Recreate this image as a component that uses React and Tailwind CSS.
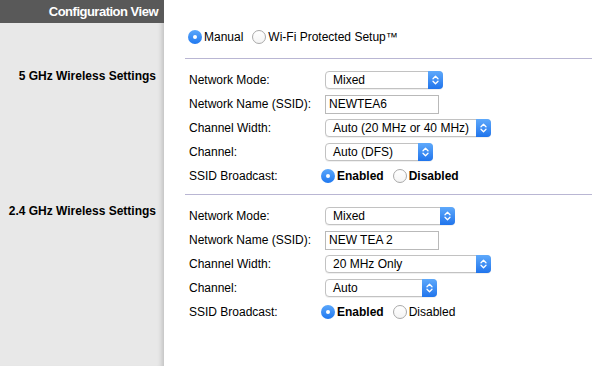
import React from 'react';

const font = { fontFamily: '"Liberation Sans", Arial, Helvetica, sans-serif' };

function Radio({ checked }) {
  return checked ? (
    <span className="flex h-[14px] w-[14px] shrink-0 items-center justify-center rounded-full bg-gradient-to-b from-[#5aa7fb] to-[#1e78f0]">
      <span className="block h-[4px] w-[4px] rounded-full bg-white" />
    </span>
  ) : (
    <span className="block h-[14px] w-[14px] shrink-0 rounded-full border border-[#a9a9a9] bg-gradient-to-b from-white to-[#f4f4f4]" />
  );
}

function Select({ value, width }) {
  return (
    <div
      className="flex h-[18px] items-stretch rounded-[4px] border border-[#c2c2c2] bg-white shadow-[0_1px_0_rgba(0,0,0,0.06)]"
      style={{ width }}
    >
      <span className="flex-1 pl-[7px] text-[12px] leading-[16px] text-black">{value}</span>
      <span className="-my-px -mr-px flex w-[15px] items-center justify-center rounded-r-[4px] bg-gradient-to-b from-[#5ea9fb] to-[#1f74ec]">
        <svg width="7" height="10" viewBox="0 0 7 10" fill="none" stroke="white" strokeWidth="1.3" strokeLinecap="round" strokeLinejoin="round">
          <path d="M1 3.8 L3.5 1.3 L6 3.8" />
          <path d="M1 6.2 L3.5 8.7 L6 6.2" />
        </svg>
      </span>
    </div>
  );
}

function TextInput({ value }) {
  return (
    <div className="flex h-[19px] w-[114px] items-center border border-[#b9b9b9] bg-white pl-[3px] text-[12px] text-black">
      {value}
    </div>
  );
}

function Row({ label, children }) {
  return (
    <div className="flex h-[24px] items-center">
      <span className="w-[136px] text-[12px] text-black">{label}</span>
      <div className="flex items-center">{children}</div>
    </div>
  );
}

function Section({ s }) {
  return (
    <div className="flex flex-col">
      <Row label="Network Mode:">
        <Select value="Mixed" width={s.modeWidth} />
      </Row>
      <Row label="Network Name (SSID):">
        <TextInput value={s.ssid} />
      </Row>
      <Row label="Channel Width:">
        <Select value={s.widthValue} width={166} />
      </Row>
      <Row label="Channel:">
        <Select value={s.channel} width={s.channelWidth} />
      </Row>
      <Row label="SSID Broadcast:">
        <div className="-ml-[4px] flex items-center text-[12px] text-black">
          <Radio checked />
          <span className="ml-[2px] font-bold">Enabled</span>
          <span className="ml-[9px]"><Radio /></span>
          <span className={`ml-[2px] ${s.boldDisabled ? 'font-bold' : ''}`}>Disabled</span>
        </div>
      </Row>
    </div>
  );
}

const sections = [
  { ssid: 'NEWTEA6', modeWidth: 118, widthValue: 'Auto (20 MHz or 40 MHz)', channel: 'Auto (DFS)', channelWidth: 108, boldDisabled: true },
  { ssid: 'NEW TEA 2', modeWidth: 130, widthValue: '20 MHz Only', channel: 'Auto', channelWidth: 112, boldDisabled: false },
];

export default function App() {
  return (
    <div className="flex h-[366px] w-[592px] overflow-hidden bg-white" style={font}>
      {/* Sidebar */}
      <aside className="flex w-[164px] shrink-0 flex-col bg-[#e8e8e8] shadow-[inset_-6px_0_5px_-4px_rgba(0,0,0,0.18)]">
        <div className="flex h-[23px] items-center justify-end bg-[#595959] pr-[6px] text-[13px] font-bold tracking-[-0.5px] text-white">
          Configuration View
        </div>
        <div className="mt-[44px] pr-[8px] text-right text-[12px] font-bold text-black">5 GHz Wireless Settings</div>
        <div className="mt-[117px] pr-[8px] text-right text-[12px] font-bold text-black">2.4 GHz Wireless Settings</div>
      </aside>

      {/* Content */}
      <main className="flex-1 pl-[21px] pt-[28px]">
        <div className="flex h-[18px] items-center pl-[3px] text-[12px] text-black">
          <Radio checked />
          <span className="ml-[2px]">Manual</span>
          <span className="ml-[9px]"><Radio /></span>
          <span className="ml-[2px]">Wi-Fi Protected Setup™</span>
        </div>
        <div className="mt-[12px] h-px bg-[#b9b6d3]" />
        <div className="pl-[4px] pt-[9px]">
          <Section s={sections[0]} />
        </div>
        <div className="mt-[6px] h-px bg-[#b9b6d3]" />
        <div className="pl-[4px] pt-[9px]">
          <Section s={sections[1]} />
        </div>
      </main>
    </div>
  );
}
